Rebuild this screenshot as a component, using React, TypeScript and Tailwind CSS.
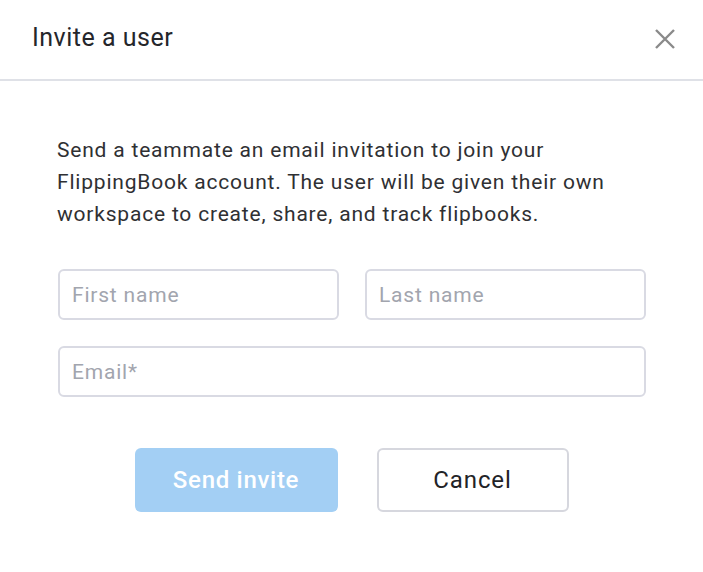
export default function App() {
  return (
    <div className="w-[703px] h-[572px] bg-white" style={{ fontFamily: 'Roboto, "Liberation Sans", sans-serif' }}>
      <div className="h-[81px] flex items-center justify-between pl-8 pr-[26px] border-b-2 border-[#dfe1e7]">
        <h1 className="text-[25px] leading-none tracking-[0.5px] text-[#25262b] pb-[4px]">Invite a user</h1>
        <button className="w-6 h-6 flex items-center justify-center text-[#8a8a8a] -mt-[2px]">
          <svg width="22" height="22" viewBox="0 0 22 22" fill="none" stroke="currentColor" strokeWidth="2.4">
            <path d="M2 2L20 20M20 2L2 20" />
          </svg>
        </button>
      </div>
      <div className="px-[57px] pt-[53px]">
        <p className="text-[21px] leading-[32px] text-[#2f3033] tracking-[0.8px]">
          Send a teammate an email invitation to join your FlippingBook account. The user will be given their own workspace to create, share, and track flipbooks.
        </p>
        <div className="mt-[39px] pl-px flex flex-col gap-[26px]">
          <div className="flex gap-[26px]">
            <input placeholder="First name" className="w-[281px] h-[51px] border-2 border-[#d9dae3] rounded-[6px] px-[12px] text-[21px] tracking-[0.8px] text-[#333] placeholder:text-[#a2a5ae] outline-none" />
            <input placeholder="Last name" className="w-[281px] h-[51px] border-2 border-[#d9dae3] rounded-[6px] px-[12px] text-[21px] tracking-[0.8px] text-[#333] placeholder:text-[#a2a5ae] outline-none" />
          </div>
          <input placeholder="Email*" className="w-[588px] h-[51px] border-2 border-[#d9dae3] rounded-[6px] px-[12px] text-[21px] tracking-[0.8px] text-[#333] placeholder:text-[#a2a5ae] outline-none" />
        </div>
      </div>
      <div className="mt-[51px] flex justify-center gap-[39px]">
        <button className="w-[203px] h-[64px] rounded-[6px] bg-[#a3cff4] text-white text-[24px] tracking-[0.7px] font-medium">Send invite</button>
        <button className="w-[192px] h-[64px] rounded-[6px] border-2 border-[#d6d7de] bg-white text-[#222327] text-[24px] tracking-[0.9px]">Cancel</button>
      </div>
    </div>
  );
}
